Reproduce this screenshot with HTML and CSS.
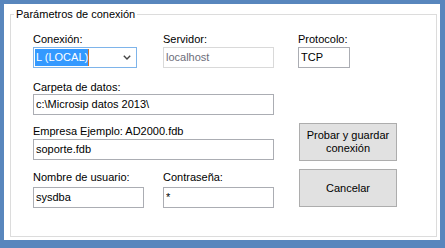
FILE: index.html
```html
<!DOCTYPE html>
<html lang="es">
<head>
    <meta charset="UTF-8">
    <meta name="viewport" content="width=device-width, initial-scale=1.0">
    <title>Parámetros de conexión</title>
    <link rel="stylesheet" href="styles.css">
</head>
<body>
    <div class="window">
        <fieldset class="group">
            <legend>Parámetros de conexión</legend>
            <div class="grid">
                <!-- Fila 1 -->
                <div class="field">
                    <label>Conexión:</label>
                    <div class="combo">
                        <span class="sel">L (LOCAL)</span><span class="caret"></span>
                        <svg class="arrow" width="8" height="5" viewBox="0 0 8 5"><path d="M0.8 0.8 L4 4 L7.2 0.8" fill="none" stroke="#444" stroke-width="1.4"/></svg>
                    </div>
                </div>
                <div class="field">
                    <label>Servidor:</label>
                    <input class="box w111" type="text" value="localhost" disabled>
                </div>
                <div class="field">
                    <label>Protocolo:</label>
                    <input class="box w52" type="text" value="TCP">
                </div>

                <!-- Fila 2 -->
                <div class="field wide row2">
                    <label>Carpeta de datos:</label>
                    <input class="box w241" type="text" value="c:\Microsip datos 2013\">
                </div>

                <!-- Fila 3 -->
                <div class="field wide row3">
                    <label>Empresa Ejemplo: AD2000.fdb</label>
                    <input class="box w241" type="text" value="soporte.fdb">
                </div>
                <button class="btn btn-test" type="button">Probar y guardar<br>conexión</button>

                <!-- Fila 4 -->
                <div class="field row4">
                    <label>Nombre de usuario:</label>
                    <input class="box w111" type="text" value="sysdba">
                </div>
                <div class="field row4">
                    <label>Contraseña:</label>
                    <input class="box w111" type="text" value="*">
                </div>
                <button class="btn btn-cancel" type="button">Cancelar</button>
            </div>
        </fieldset>
    </div>
</body>
</html>
```

FILE: styles.css
```css
body {
    margin: 0;
    background-color: #5886bd;
    font-family: 'Liberation Sans', Arial, sans-serif;
    font-size: 11px;
    color: #000;
}
.window {
    background-color: #ffffff;
    margin: 4px 5px 8px 4px;
    height: 236px;
    padding: 3px 3px 0 6px;
    box-sizing: border-box;
}
.group {
    margin: 0;
    padding: 0;
    border: 1px solid #dcdcdc;
    height: 230px;
    box-sizing: border-box;
    min-width: 0;
}
.group legend {
    padding: 0 2px;
    margin-left: 3px;
    line-height: 14px;
}
.grid {
    display: grid;
    grid-template-columns: 130px 135px 1fr;
    grid-template-rows: 47px 44px 46px 38px;
    padding: 11px 0 0 22px;
}
.field label {
    display: block;
    height: 14px;
    line-height: 14px;
    margin-bottom: 1px;
    white-space: nowrap;
}
.wide {
    grid-column: 1 / span 2;
}
.row2 {
    padding-top: 1px;
}
.row2 label {
    margin-bottom: 0;
}
.row3 {
    padding-top: 1px;
}
.row4 {
    padding-top: 1px;
}
.row4 label {
    margin-bottom: 3px;
}
.box {
    display: block;
    height: 21px;
    box-sizing: border-box;
    border: 1px solid #abadb3;
    padding: 0 2px 1px 2px;
    margin: 0;
    font-family: inherit;
    font-size: 11px;
    color: #000;
    background-color: #fff;
    outline: none;
}
.box:disabled {
    border-color: #d9d9d9;
    color: #6d6d7a;
    background-color: #fff;
}
.w52 { width: 52px; }
.w111 { width: 111px; }
.w241 { width: 241px; }
.combo {
    width: 104px;
    height: 21px;
    box-sizing: border-box;
    border: 1px solid #7eb4ea;
    padding: 1px;
    display: flex;
    align-items: center;
}
.sel {
    background-color: #3399ff;
    color: #fff;
    height: 17px;
    line-height: 17px;
    padding: 0 0 0 1px;
}
.caret {
    width: 1px;
    height: 17px;
    background-color: #d2732a;
}
.arrow {
    margin-left: auto;
    margin-right: 4px;
}
.btn {
    grid-column: 3;
    width: 98px;
    height: 38px;
    margin-left: 1px;
    background-color: #e1e1e1;
    border: 1px solid #adadad;
    font-family: inherit;
    font-size: 11px;
    line-height: 13px;
    color: #000;
    padding: 0;
}
.btn-test {
    grid-row: 3;
}
.btn-cancel {
    grid-row: 4;
}
```
